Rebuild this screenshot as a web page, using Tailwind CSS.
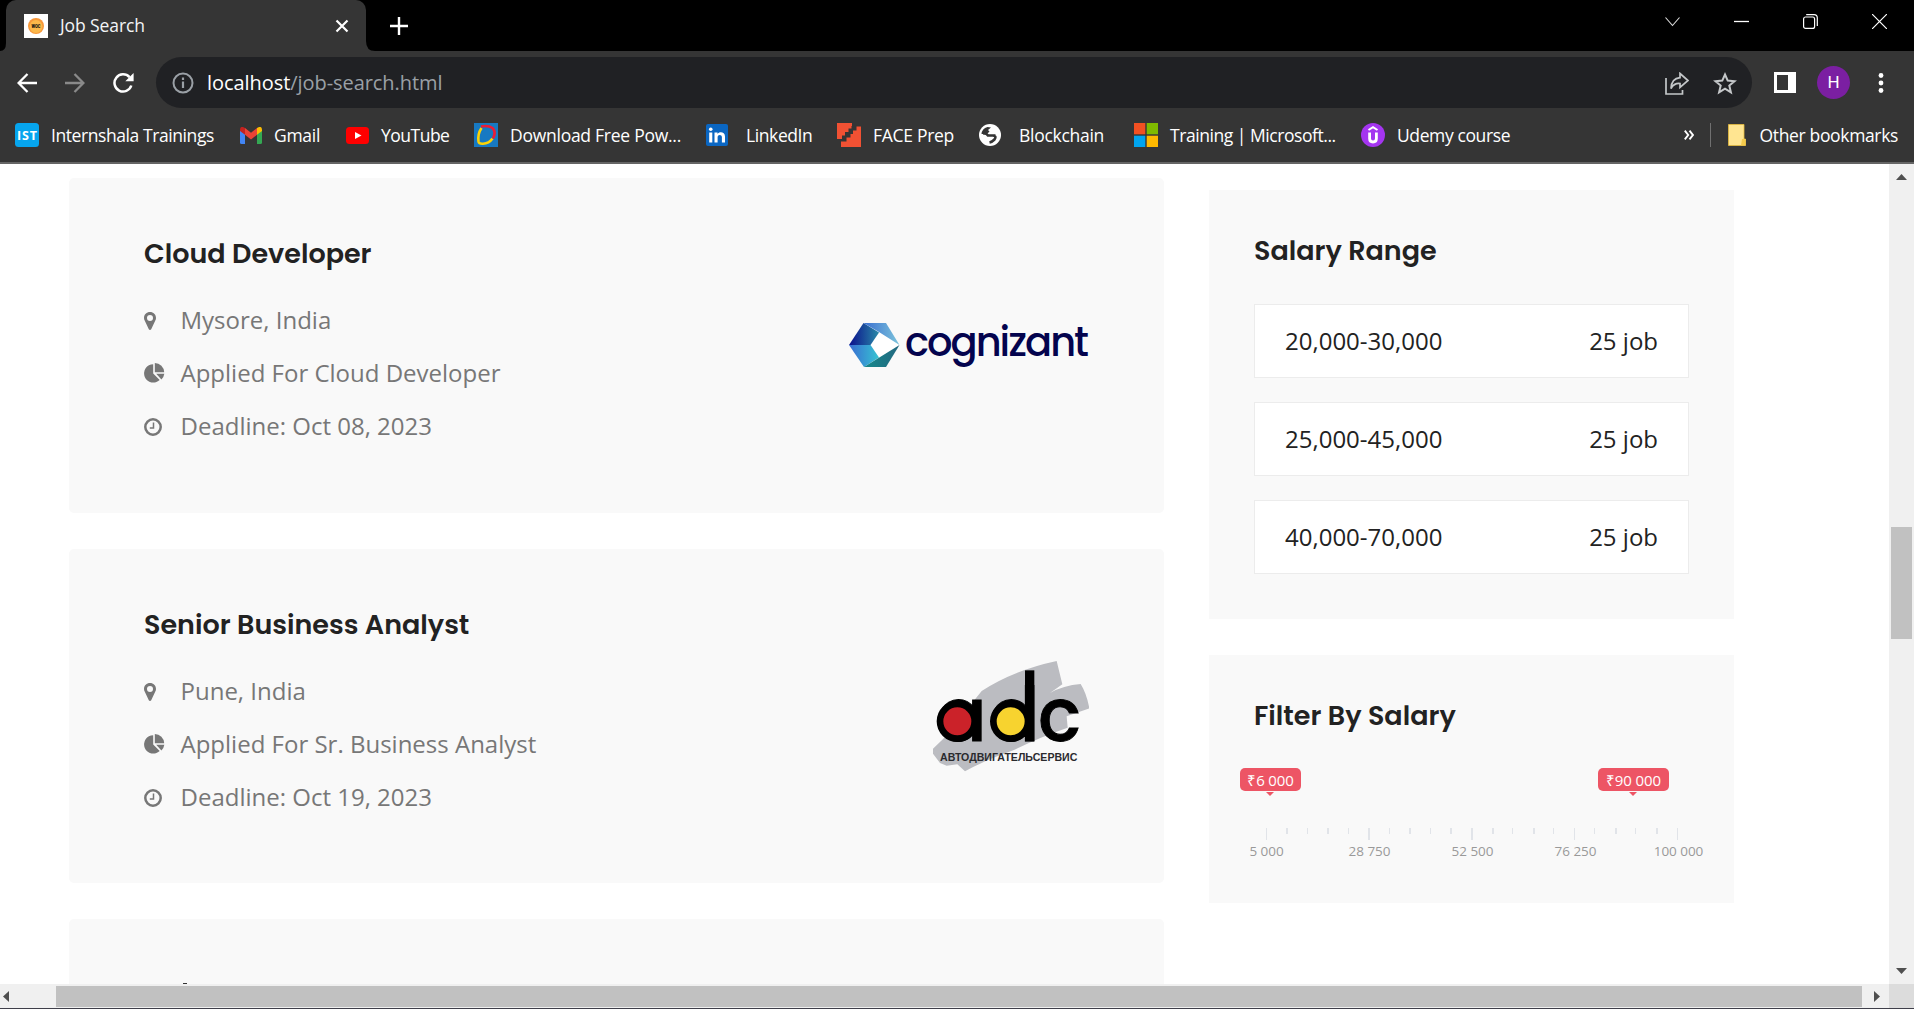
<!DOCTYPE html>
<html lang="en">
<head>
<meta charset="utf-8">
<title>Job Search</title>
<script src="https://cdn.jsdelivr.net/npm/@tailwindcss/browser@4"></script>
</head>
<body class="w-[1914px] h-[1009px] overflow-hidden flex flex-col bg-white font-['Open_Sans',sans-serif]">

<svg class="hidden">
  <symbol id="pin" viewBox="0 0 12 18"><path fill-rule="evenodd" d="M6 0C9.400 0 12 2.600 12 5.900C12 7 11.700 7.800 11.200 8.800L7.200 17.200C6.700 18.200 5.300 18.200 4.800 17.200L.8 8.800C.3 7.800 0 7 0 5.900C0 2.600 2.600 0 6 0ZM6 3A3 3 0 1 0 6 9A3 3 0 1 0 6 3Z"/></symbol>
  <symbol id="pie" viewBox="0 0 21 20"><path d="M9.200 1.200V10.400L15.700 17A9.200 9.200 0 1 1 9.200 1.200Z"/><path d="M10.800 0A9.400 9.400 0 0 1 20.200 9.200H10.800Z"/><path d="M12.200 10.800H20.300A9.200 9.200 0 0 1 17.400 16.400Z"/></symbol>
  <symbol id="clock" viewBox="0 0 18 18"><circle cx="9" cy="9" r="7.700" fill="none" stroke="currentColor" stroke-width="2.500"/><path d="M9.500 4.500V9.900H5.800" fill="none" stroke="currentColor" stroke-width="1.500"/></symbol>
</svg>

<!-- Tab strip -->
<div class="h-[51px] shrink-0 bg-black flex items-stretch">
  <div class="relative ml-1.5 w-[360px] bg-[#353535] rounded-t-[10px] flex items-center pl-[18px]">
    <svg class="absolute -left-[6px] bottom-0 w-1.5 h-2" viewBox="0 0 6 8"><path fill="#353535" d="M6 0V8H0Q6 8 6 0Z"/></svg>
    <svg class="absolute -right-[9px] bottom-0 w-[9px] h-2.5" viewBox="0 0 9 10"><path fill="#353535" d="M0 0V10H9Q0 10 0 0Z"/></svg>
    <svg class="w-6 h-6" viewBox="0 0 24 24"><rect width="24" height="24" fill="#fff"/><circle cx="12" cy="12" r="8" fill="#f7983a"/><circle cx="12" cy="12.500" r="6.400" fill="#fbb84a"/><text x="12" y="14.300" font-family="Roboto" font-weight="900" font-size="5.500" text-anchor="middle" fill="#111" textLength="9" lengthAdjust="spacingAndGlyphs">WOC</text></svg>
    <span class="ml-3 text-[17.5px] tracking-[-0.1px] text-gray-100 leading-none w-[275px]">Job Search</span>
    <svg class="w-[14px] h-[14px]" viewBox="0 0 14 14" stroke="#fff" stroke-width="2.200"><path d="M1.500 1.500L12.500 12.500M12.500 1.500L1.500 12.500"/></svg>
  </div>
  <svg class="self-center ml-6 w-[18px] h-[18px]" viewBox="0 0 18 18" stroke="#fff" stroke-width="2.400"><path d="M9 0V18M0 9H18"/></svg>
  <div class="ml-auto mr-[27px] pt-3.5 flex items-start gap-[54px]">
    <svg class="w-[15px] h-[15px]" viewBox="0 0 15 15" fill="none" stroke="#ddd" stroke-width="1.100"><path d="M.5 3.500L7.500 11.500L14.500 3.500"/></svg>
    <svg class="w-[15px] h-[15px]" viewBox="0 0 15 15" stroke="#fff" stroke-width="1.300"><path d="M0 7.500H15"/></svg>
    <svg class="w-[15px] h-[15px]" viewBox="0 0 15 15" fill="none" stroke="#fff" stroke-width="1.200"><rect x=".6" y="3" width="11" height="11.400" rx="2"/><path d="M3.200 .7H11Q14.300 .7 14.300 4V12"/></svg>
    <svg class="w-[15px] h-[15px]" viewBox="0 0 15 15" stroke="#fff" stroke-width="1.200"><path d="M0 0L15 15M15 0L0 15"/></svg>
  </div>
</div>

<!-- Toolbar -->
<div class="h-[63px] shrink-0 bg-[#353535] flex items-center">
  <svg class="ml-[17px] w-5 h-5" viewBox="0 0 20 20" fill="none" stroke="#fff" stroke-width="2.300"><path d="M20 10H2M10.500 1L1.600 10L10.500 19"/></svg>
  <svg class="ml-7 w-5 h-5" viewBox="0 0 20 20" fill="none" stroke="#8a8a8a" stroke-width="2.300"><path d="M0 10H18M9.500 1L18.400 10L9.500 19"/></svg>
  <svg class="ml-7 w-[21px] h-[20px]" viewBox="0 0 21 20" fill="none" stroke="#fff" stroke-width="2.500"><path d="M18.300 12.500A8.600 8.600 0 1 1 16.500 4.200"/><path d="M20.600 0V8.300H12.300Z" fill="#fff" stroke="none"/></svg>
  <div class="ml-[22px] w-[1596px] h-[51px] rounded-full bg-[#202124] flex items-center pl-4 pr-[15px]">
    <svg class="w-[22px] h-[22px] mt-px" viewBox="0 0 22 22"><circle cx="11" cy="11" r="9.500" fill="none" stroke="#9aa0a6" stroke-width="2"/><path d="M11 9.500V16M11 5.500V8" stroke="#9aa0a6" stroke-width="2.200"/></svg>
    <span class="ml-[13px] text-[20px] tracking-[-0.06px] leading-none text-[#9aa0a6] pt-px"><span class="text-white">localhost</span>/job-search.html</span>
    <svg class="ml-auto w-[24px] h-[23px] mt-px" viewBox="0 0 24 23" fill="none" stroke="#c4c7c9" stroke-width="1.700"><path d="M1 6V22H17.500V18"/><path d="M15 1.500L23 8.500L15 15.500V11.500Q9 11 6 16.500Q6.500 6.500 15 5.700Z"/></svg>
    <svg class="ml-6 w-[24px] h-[23px] mt-px" viewBox="0 0 24 23" fill="none" stroke="#c4c7c9" stroke-width="2"><path d="M12 2.500L14.700 8.600L21.500 9.200L16.300 13.600L17.900 20.300L12 16.700L6.100 20.300L7.700 13.600L2.500 9.200L9.300 8.600Z"/></svg>
  </div>
  <svg class="ml-[22px] w-[22px] h-[21px]" viewBox="0 0 22 21"><path fill="#fff" fill-rule="evenodd" d="M0 0H22V21H0ZM3 3V18H14V3Z"/></svg>
  <div class="ml-[21px] size-[33px] rounded-full bg-[#7b1fa2] text-white text-[17px] font-['Roboto'] flex items-center justify-center leading-none">H</div>
  <svg class="ml-[28px] w-[6px] h-5" viewBox="0 0 6 20" fill="#fff"><circle cx="3" cy="2.500" r="2.400"/><circle cx="3" cy="10" r="2.400"/><circle cx="3" cy="17.500" r="2.400"/></svg>
</div>

<!-- Bookmarks bar -->
<div class="h-[50px] shrink-0 bg-[#353535] border-b-2 border-[#656565] flex items-center pl-[15px] pb-[6px] text-[17.5px] leading-6 text-white whitespace-nowrap">
  <div class="w-[225px] flex items-center gap-3">
    <svg class="w-6 h-6" viewBox="0 0 24 24"><rect width="24" height="24" rx="3.500" fill="#06a5ee"/><text x="12" y="16.500" font-family="Open Sans" font-weight="700" font-size="12.500" text-anchor="middle" fill="#fff" textLength="20">IST</text></svg>
    <span class="tracking-[-0.42px] pb-px">Internshala Trainings</span>
  </div>
  <div class="w-[106px] flex items-center gap-3">
    <svg class="w-[22px] h-[17px]" viewBox="0 0 22 17"><path fill="#4285f4" d="M0 3V15.500Q0 17 1.500 17H5V7Z"/><path fill="#34a853" d="M22 3V15.500Q22 17 20.500 17H17V7Z"/><path fill="#ea4335" d="M5 1L11 5.800L17 1V7.800L11 12.500L5 7.800Z"/><path fill="#c5221f" d="M0 2.500Q.3-1 3.500 .2L5 1V7.800L0 4Z"/><path fill="#fbbc04" d="M22 2.500Q21.700-1 18.500 .2L17 1V7.800L22 4Z"/></svg>
    <span class="tracking-[-0.29px] pb-px">Gmail</span>
  </div>
  <div class="w-[128px] flex items-center gap-3">
    <svg class="w-[23px] h-[17px]" viewBox="0 0 23 17"><rect width="23" height="17" rx="3.500" fill="#f00"/><path d="M9 5V12L15.500 8.500Z" fill="#fff"/></svg>
    <span class="tracking-[-0.5px] pb-px">YouTube</span>
  </div>
  <div class="w-[232px] flex items-center gap-3">
    <svg class="w-6 h-6" viewBox="0 0 24 24" fill="none" stroke-width="2.600"><rect width="24" height="24" fill="#1779c2"/><path stroke="#fdd305" d="M7.500 5Q3.500 11 4.500 18.500Q5 21 9 20.700Q15 20.500 18.500 15.500"/><path stroke="#ee1c35" d="M7 3.500Q14 2 18.500 5Q22.500 9 19 15.500"/></svg>
    <span class="tracking-[-0.26px] pb-px">Download Free Pow...</span>
  </div>
  <div class="w-[131px] flex items-center gap-[18px]">
    <svg class="w-[22px] h-[22px]" viewBox="0 0 22 22"><rect width="22" height="22" rx="2" fill="#0a66c2"/><path fill="#fff" d="M3.200 8.500H6.300V18.500H3.200ZM8.500 8.500H11.500V10C13 7.500 19 7.500 19 12.500V18.500H15.900V13.300C15.900 10.200 11.600 10.300 11.600 13.300V18.500H8.500Z"/><circle cx="4.750" cy="5.200" r="1.800" fill="#fff"/></svg>
    <span class="tracking-[-0.4px] pb-px">LinkedIn</span>
  </div>
  <div class="w-[142px] flex items-center gap-3">
    <svg class="w-6 h-6" viewBox="0 0 24 24" fill="#f15133"><path d="M0 0H15V3H14.500V5.500H11.500V9H8V12.500H5V16H0Z"/><path d="M24 3.500H19.500V7.500H16V11H13.500V14.500H9.500V18.500H4V24H24Z"/></svg>
    <span class="tracking-[-0.29px] pb-px">FACE Prep</span>
  </div>
  <div class="w-[155px] flex items-center gap-[18px]">
    <svg class="w-[22px] h-[22px]" viewBox="0 0 22 22"><circle cx="11" cy="11" r="11" fill="#fff"/><path fill="#353535" d="M2.500 10Q3 4.500 8.500 3L12 3.500L9 6L10.500 7.500Q9 10 5.500 10Z"/><path fill="none" stroke="#353535" stroke-width="2.600" d="M4 9.500Q7.500 9 9 11.500H16.500M14 11.500Q18 12 15.500 15.500Q13 18 10.500 18.500"/></svg>
    <span class="tracking-[-0.28px] pb-px">Blockchain</span>
  </div>
  <div class="w-[227px] flex items-center gap-3">
    <svg class="w-6 h-6" viewBox="0 0 24 24"><path fill="#f25022" d="M0 0H11.300V11.300H0Z"/><path fill="#7fba00" d="M12.700 0H24V11.300H12.700Z"/><path fill="#00a4ef" d="M0 12.700H11.300V24H0Z"/><path fill="#ffb900" d="M12.700 12.700H24V24H12.700Z"/></svg>
    <span class="tracking-[-0.45px] pb-px">Training | Microsoft...</span>
  </div>
  <div class="flex items-center gap-3">
    <svg class="w-6 h-6" viewBox="0 0 24 24" fill="none" stroke="#fff"><circle cx="12" cy="12" r="12" fill="#a435f0" stroke="none"/><path stroke-width="2" d="M7.500 7L12 4.200L16.500 7"/><path stroke-width="2.800" d="M8.600 9.500V15.500Q8.600 19 12 19Q15.400 19 15.400 15.500V9.500"/></svg>
    <span class="tracking-[-0.39px] pb-px">Udemy course</span>
  </div>
  <svg class="ml-auto w-[10px] h-[10px]" viewBox="0 0 10 10" fill="none" stroke="#fff" stroke-width="1.900"><path d="M.8 .7L4.200 5L.8 9.300M5.500 .7L8.900 5L5.500 9.300"/></svg>
  <div class="ml-4 w-px h-6 bg-[#707070]"></div>
  <svg class="ml-[17px] w-[18px] h-[22px]" viewBox="0 0 18 22"><path fill="#ffe591" stroke="#e8bd3c" stroke-width=".8" d="M.5 .5H16V15H17.500V21.500H.5Z"/><path fill="#f5cb4c" d="M13 21.500L14 15H17.500V21.500Z"/></svg>
  <span class="ml-3.5 mr-4 tracking-[-0.35px] pb-px">Other bookmarks</span>
</div>

<!-- Page viewport -->
<div class="h-[820px] shrink-0 flex">
  <main class="w-[1889px] h-full overflow-hidden flex items-start pl-[69px] text-[24px]">
    <section class="mt-3.5 w-[1095px] flex flex-col gap-9 text-[#777]">
      <article class="h-[335px] shrink-0 bg-[#f9f9f9] rounded-[5px] flex justify-between pl-[75px] pr-[75px]">
        <div class="pt-14">
          <h2 class="font-['Poppins'] font-semibold text-[27px] leading-10 text-[#222]">Cloud Developer</h2>
          <ul class="mt-[19px] leading-[53px]">
            <li class="flex items-center"><span class="w-[36.500px]"><svg class="w-3 h-[18px] mt-0.5" fill="#777"><use href="#pin"/></svg></span>Mysore, India</li>
            <li class="flex items-center"><span class="w-[36.500px]"><svg class="w-[21px] h-5" fill="#777"><use href="#pie"/></svg></span>Applied For Cloud Developer</li>
            <li class="flex items-center"><span class="w-[36.500px]"><svg class="w-[18px] h-[18px] mt-0.5"><use href="#clock"/></svg></span>Deadline: Oct 08, 2023</li>
          </ul>
        </div>
        <svg class="mt-[145px] w-[240px] h-[46px]" viewBox="0 0 240 46">
          <defs>
            <linearGradient id="c1" x1="0" x2="1"><stop offset="0" stop-color="#0a0e8c"/><stop offset="1" stop-color="#2a8aa8"/></linearGradient>
            <linearGradient id="c2" x1="0" x2="1"><stop offset="0" stop-color="#3a6fd0"/><stop offset="1" stop-color="#7cc4dc"/></linearGradient>
            <linearGradient id="c3" x1="0" x2="1"><stop offset="0" stop-color="#3a6cd2"/><stop offset="1" stop-color="#35c4d2"/></linearGradient>
            <linearGradient id="c4" x1="0" x2="1"><stop offset="0" stop-color="#158a8c"/><stop offset="1" stop-color="#23677f"/></linearGradient>
          </defs>
          <path fill="#fff" d="M30 9L50 22L30 35L22 22Z"/>
          <path fill="url(#c1)" d="M0 22L14.500 0L30 9.500L21.500 22Z"/>
          <path fill="url(#c2)" d="M14.500 0H37L50.500 22L30 9Z"/>
          <path fill="url(#c3)" d="M0 22H21.500L30 34.500L15 44Z"/>
          <path fill="url(#c4)" d="M50.500 22L37 44H15Z"/>
          <text x="56" y="33" font-family="Poppins" font-weight="500" font-size="40" fill="#04044e" textLength="184" lengthAdjust="spacing">cognizant</text>
        </svg>
      </article>

      <article class="h-[334px] shrink-0 bg-[#f9f9f9] rounded-[5px] flex justify-between pl-[75px] pr-[75px]">
        <div class="pt-14">
          <h2 class="font-['Poppins'] font-semibold text-[27px] leading-10 text-[#222]">Senior Business Analyst</h2>
          <ul class="mt-[19px] leading-[53px]">
            <li class="flex items-center"><span class="w-[36.500px]"><svg class="w-3 h-[18px] mt-0.5" fill="#777"><use href="#pin"/></svg></span>Pune, India</li>
            <li class="flex items-center"><span class="w-[36.500px]"><svg class="w-[21px] h-5" fill="#777"><use href="#pie"/></svg></span>Applied For Sr. Business Analyst</li>
            <li class="flex items-center"><span class="w-[36.500px]"><svg class="w-[18px] h-[18px] mt-0.5"><use href="#clock"/></svg></span>Deadline: Oct 19, 2023</li>
          </ul>
        </div>
        <svg class="mt-[112px] w-[156px] h-[112px]" viewBox="99 62 468 336">
          <path fill="#bbbcc1" d="M245 152Q340 90 470 62L487 132L450 158Q490 135 542 131Q560 160 568 204L500 228L503 262Q420 290 340 330Q250 362 195 393L172 372L140 376L120 368L99 340V325L130 295Z"/>
          <g font-family="Poppins" font-weight="500" font-size="222" fill="#000" stroke="#000" stroke-width="3"><text x="260" y="302" text-anchor="end">a</text><text x="418" y="302" text-anchor="end">d</text><text x="415" y="302" textLength="128" lengthAdjust="spacingAndGlyphs">c</text></g>
          <path d="M375 90H403V303H375Z"/>
          <circle cx="172" cy="243" r="52" fill="#cb2229" stroke="#000" stroke-width="20"/>
          <circle cx="332" cy="243" r="52" fill="#f7d32f" stroke="#000" stroke-width="20"/>
          <text x="120" y="361" font-family="Liberation Sans" font-weight="700" font-size="31" fill="#2a2a2e" textLength="412" lengthAdjust="spacingAndGlyphs">АВТОДВИГАТЕЛЬСЕРВИС</text>
        </svg>
      </article>

      <!-- Next card; only the tip of its heading shows above the fold -->
      <article class="h-[335px] shrink-0 bg-[#f9f9f9] rounded-[5px] pl-[114px] pt-16">
        <div class="w-1 h-px bg-[#333]"></div>
      </article>
    </section>

    <aside class="ml-[45px] mt-[26px] w-[525px] flex flex-col gap-9 text-[#222]">
      <div class="h-[429px] bg-[#f9f9f9] pl-[45px] pr-[45px] pt-[41px]">
        <h3 class="font-['Poppins'] font-semibold text-[27px] leading-10">Salary Range</h3>
        <div class="mt-[33px] flex flex-col gap-6">
          <div class="h-[74px] bg-white border border-[#ececec] px-[30px] flex items-center justify-between"><span>20,000-30,000</span><span>25 job</span></div>
          <div class="h-[74px] bg-white border border-[#ececec] px-[30px] flex items-center justify-between"><span>25,000-45,000</span><span>25 job</span></div>
          <div class="h-[74px] bg-white border border-[#ececec] px-[30px] flex items-center justify-between"><span>40,000-70,000</span><span>25 job</span></div>
        </div>
      </div>
      <div class="h-[248px] bg-[#f9f9f9] pt-[41px]">
        <h3 class="pl-[45px] font-['Poppins'] font-semibold text-[27px] leading-10">Filter By Salary</h3>
        <div class="relative mt-8 h-[100px]">
          <div class="absolute left-[31px] top-0 w-[61px] h-[23px] rounded-[5px] bg-[#ed5565] text-white text-[15px] leading-[25px] tracking-[-0.15px] text-center">₹6 000</div>
          <div class="absolute left-[57px] top-6 border-x-4 border-t-4 border-x-transparent border-t-[#ed5565]"></div>
          <div class="absolute left-[389px] top-0 w-[71px] h-[23px] rounded-[5px] bg-[#ed5565] text-white text-[15px] leading-[25px] tracking-[-0.11px] text-center">₹90 000</div>
          <div class="absolute left-[420px] top-6 border-x-4 border-t-4 border-x-transparent border-t-[#ed5565]"></div>
          <svg class="absolute left-[57px] top-[60px] w-[413px] h-3" viewBox="0 0 413 12" fill="#e1e4e9" shape-rendering="crispEdges" id="ticks"></svg>
          <div class="absolute left-[6px] top-[73px] w-[515px] grid grid-cols-5 text-[13.5px] leading-[20px] tracking-[-0.05px] text-[#999] text-center">
            <span>5 000</span><span>28 750</span><span>52 500</span><span>76 250</span><span>100 000</span>
          </div>
        </div>
      </div>
    </aside>
  </main>

  <!-- Vertical scrollbar -->
  <div class="w-[25px] h-full bg-[#f0f0f0] flex flex-col items-center">
    <svg class="mt-2.5 w-[11px] h-1.5" viewBox="0 0 11 6" fill="#4f4f4f"><path d="M5.500 0L11 6H0Z"/></svg>
    <div class="mt-[347px] w-[21px] h-[112px] bg-[#c1c1c1]"></div>
    <svg class="mt-auto mb-2.5 w-[11px] h-1.5" viewBox="0 0 11 6" fill="#4f4f4f"><path d="M0 0H11L5.500 6Z"/></svg>
  </div>
</div>

<!-- Horizontal scrollbar -->
<div class="h-[24px] shrink-0 bg-[#f0f0f0] flex items-center">
  <svg class="ml-[3px] w-1.5 h-[11px]" viewBox="0 0 6 11" fill="#4f4f4f"><path d="M6 0V11L0 5.500Z"/></svg>
  <div class="ml-[47px] w-[1806px] h-[21px] bg-[#c1c1c1]"></div>
  <svg class="ml-3 w-1.5 h-[11px]" viewBox="0 0 6 11" fill="#4f4f4f"><path d="M0 0V11L6 5.500Z"/></svg>
  <div class="ml-auto w-[25px] h-full bg-[#dcdcdc]"></div>
</div>
<div class="h-px shrink-0 bg-[#3f3f4a]"></div>

<script>
  // 21 slider ticks, every fifth one is major
  const ticks = document.getElementById('ticks');
  for (let i = 0; i <= 20; i++) {
    const r = document.createElementNS('http://www.w3.org/2000/svg', 'rect');
    r.setAttribute('x', Math.floor(i * 20.55));
    r.setAttribute('y', 0);
    r.setAttribute('width', i === 5 || i === 10 || (i % 5 && i % 2) ? 2 : 1);
    r.setAttribute('height', i % 5 ? 6 : 12);
    ticks.appendChild(r);
  }
</script>
</body>
</html>
